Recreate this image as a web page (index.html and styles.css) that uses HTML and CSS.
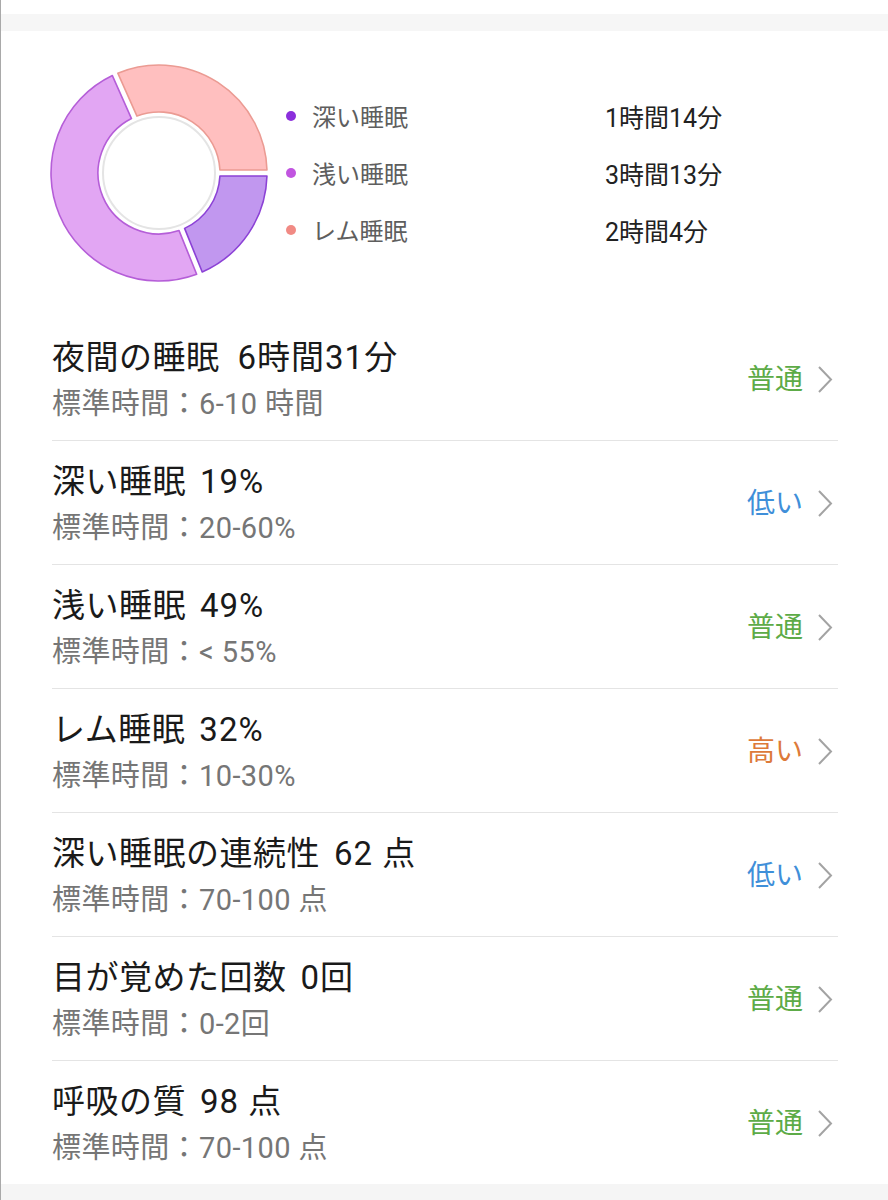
FILE: index.html
```html
<!DOCTYPE html>
<html lang="ja">
<head>
<meta charset="utf-8">
<title>睡眠</title>
<link rel="stylesheet" href="styles.css">
</head>
<body>
<div class="page">
  <div class="top-gap"></div>
  <div class="band"></div>
  <div class="card">
    <section class="chart">
      <svg class="donut" width="280" height="286" viewBox="1 31 280 286" xmlns="http://www.w3.org/2000/svg">
        <circle cx="159" cy="173" r="56" fill="none" stroke="#e4e4e4" stroke-width="2"/>
        <path d="M266.96,176 A108,108 0 0 1 202.23,271.97 L184.61,228.37 A61,61 0 0 0 219.93,176 Z" fill="#c197ef" stroke="#8c42d6" stroke-width="1.6" stroke-linejoin="round"/>
        <path d="M196.66,274.22 A108,108 0 0 1 112.36,75.59 L131.48,118.56 A61,61 0 0 0 179.04,230.61 Z" fill="#e2a6f3" stroke="#b55ed8" stroke-width="1.6" stroke-linejoin="round"/>
        <path d="M117.82,73.15 A108,108 0 0 1 266.96,170 L219.93,170 A61,61 0 0 0 136.96,116.12 Z" fill="#ffbfbf" stroke="#eb9b93" stroke-width="1.6" stroke-linejoin="round"/>
      </svg>
      <div class="legend">
        <div class="legend-item"><span class="dot dot-deep"></span><span class="legend-label">深い睡眠</span><span class="legend-value">1時間14分</span></div>
        <div class="legend-item"><span class="dot dot-light"></span><span class="legend-label">浅い睡眠</span><span class="legend-value">3時間13分</span></div>
        <div class="legend-item"><span class="dot dot-rem"></span><span class="legend-label">レム睡眠</span><span class="legend-value">2時間4分</span></div>
      </div>
    </section>
    <ul class="list">
      <li class="row">
        <div class="info">
          <div class="title"><span class="name">夜間の睡眠</span><span class="val val-wide">6時間31分</span></div>
          <div class="sub">標準時間：6-10 時間</div>
        </div>
        <div class="status status-normal">普通<svg class="chev" width="16" height="29" viewBox="0 0 16 29"><polyline points="2,2 14,14.5 2,27" fill="none" stroke="#a3a3a3" stroke-width="2"/></svg></div>
      </li>
      <li class="row">
        <div class="info">
          <div class="title"><span class="name">深い睡眠</span><span class="val">19%</span></div>
          <div class="sub">標準時間：20-60%</div>
        </div>
        <div class="status status-low">低い<svg class="chev" width="16" height="29" viewBox="0 0 16 29"><polyline points="2,2 14,14.5 2,27" fill="none" stroke="#a3a3a3" stroke-width="2"/></svg></div>
      </li>
      <li class="row">
        <div class="info">
          <div class="title"><span class="name">浅い睡眠</span><span class="val">49%</span></div>
          <div class="sub">標準時間：&lt; 55%</div>
        </div>
        <div class="status status-normal">普通<svg class="chev" width="16" height="29" viewBox="0 0 16 29"><polyline points="2,2 14,14.5 2,27" fill="none" stroke="#a3a3a3" stroke-width="2"/></svg></div>
      </li>
      <li class="row">
        <div class="info">
          <div class="title"><span class="name">レム睡眠</span><span class="val">32%</span></div>
          <div class="sub">標準時間：10-30%</div>
        </div>
        <div class="status status-high">高い<svg class="chev" width="16" height="29" viewBox="0 0 16 29"><polyline points="2,2 14,14.5 2,27" fill="none" stroke="#a3a3a3" stroke-width="2"/></svg></div>
      </li>
      <li class="row">
        <div class="info">
          <div class="title"><span class="name">深い睡眠の連続性</span><span class="val">62 点</span></div>
          <div class="sub">標準時間：70-100 点</div>
        </div>
        <div class="status status-low">低い<svg class="chev" width="16" height="29" viewBox="0 0 16 29"><polyline points="2,2 14,14.5 2,27" fill="none" stroke="#a3a3a3" stroke-width="2"/></svg></div>
      </li>
      <li class="row">
        <div class="info">
          <div class="title"><span class="name">目が覚めた回数</span><span class="val">0回</span></div>
          <div class="sub">標準時間：0-2回</div>
        </div>
        <div class="status status-normal">普通<svg class="chev" width="16" height="29" viewBox="0 0 16 29"><polyline points="2,2 14,14.5 2,27" fill="none" stroke="#a3a3a3" stroke-width="2"/></svg></div>
      </li>
      <li class="row">
        <div class="info">
          <div class="title"><span class="name">呼吸の質</span><span class="val">98 点</span></div>
          <div class="sub">標準時間：70-100 点</div>
        </div>
        <div class="status status-normal">普通<svg class="chev" width="16" height="29" viewBox="0 0 16 29"><polyline points="2,2 14,14.5 2,27" fill="none" stroke="#a3a3a3" stroke-width="2"/></svg></div>
      </li>
    </ul>
  </div>
  <div class="band band-bottom"></div>
</div>
</body>
</html>
```
FILE: styles.css
```css
* { box-sizing: border-box; }
html, body { margin: 0; padding: 0; background: #ffffff; }
body {
  font-family: Roboto, "Noto Sans CJK JP", "Noto Sans", sans-serif;
  color: #1c1c1c;
}
.page {
  width: 888px;
  min-height: 1200px;
  border-left: 1px solid #a9a9a9;
  background: #ffffff;
}
.top-gap { height: 14px; }
.band { height: 17px; background: #f6f6f6; }
.band-bottom { height: 16px; background: #f5f5f5; }
.card { background: #ffffff; }

.chart {
  display: flex;
  height: 286px;
}
.donut { display: block; flex: none; }
.legend {
  margin-left: 5px;
  padding-top: 56px;
}
.legend-item {
  display: flex;
  align-items: center;
  height: 57px;
}
.dot {
  width: 10px;
  height: 10px;
  border-radius: 50%;
  margin-right: 16px;
  flex: none;
}
.dot-deep { background: #8b2fdc; }
.dot-light { background: #c155e0; }
.dot-rem { background: #f18a84; }
.legend-label {
  width: 293px;
  font-size: 24px;
  color: #5e5e5e;
}
.legend-value {
  font-size: 25px;
  color: #222222;
}

.list {
  list-style: none;
  margin: 0 50px 0 51px;
  padding: 0;
}
.row {
  display: flex;
  align-items: center;
  justify-content: space-between;
  padding: 21px 5px 19px 0;
  border-bottom: 1px solid #e4e4e4;
}
.row:last-child { border-bottom: none; }
.title {
  font-size: 33px;
  letter-spacing: 1px;
  line-height: 40px;
  color: #1a1a1a;
  white-space: nowrap;
}
.name { letter-spacing: 0.5px; }
.val { margin-left: 14px; }
.val-wide { margin-left: 18px; }
.sub {
  margin-top: 9px;
  font-size: 29px;
  letter-spacing: 0.4px;
  line-height: 34px;
  color: #767676;
  white-space: nowrap;
}
.status {
  display: flex;
  align-items: center;
  font-size: 28px;
  line-height: 34px;
}
.chev { display: block; margin-left: 14px; }
.status-normal { color: #5dab47; }
.status-low { color: #3f8fd9; }
.status-high { color: #dd7a3a; }
```
